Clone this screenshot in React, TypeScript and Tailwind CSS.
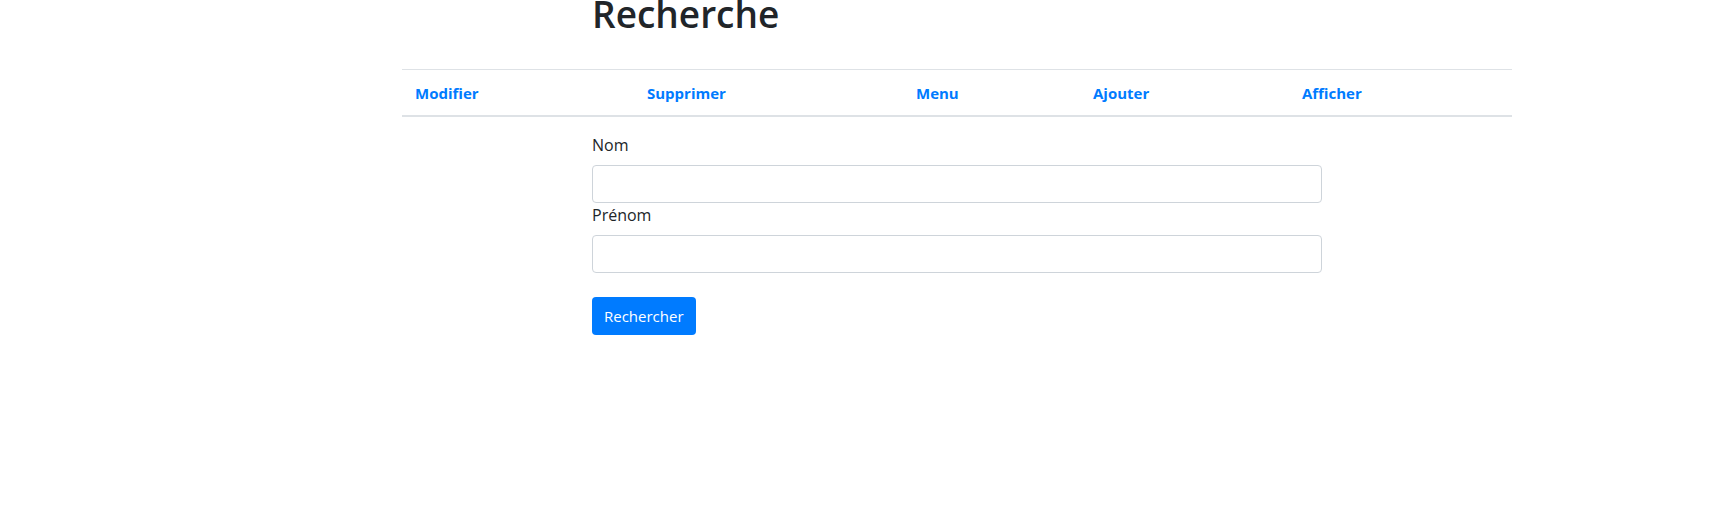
const NAV = [
  { label: "Modifier", w: "w-[232px]" },
  { label: "Supprimer", w: "w-[269px]" },
  { label: "Menu", w: "w-[177px]" },
  { label: "Ajouter", w: "w-[209px]" },
  { label: "Afficher", w: "flex-1" },
];

const Field = ({ label }: { label: string }) => (
  <div>
    <label className="block mb-2 text-[16px] leading-6 text-[#212529]">{label}</label>
    <input
      type="text"
      className="block w-full h-[38px] rounded border border-[#ced4da] bg-white px-3 text-[16px] text-[#495057] outline-none"
    />
  </div>
);

export default function App() {
  return (
    <div
      className="min-h-[531px] w-full bg-white"
      style={{ fontFamily: '"Open Sans", "Noto Sans", sans-serif' }}
    >
      {/* title */}
      <div className="ml-[592px] pb-[42px]">
        <h1 className="text-[37px] font-semibold leading-[27px] text-[#212529]">Recherche</h1>
      </div>

      {/* menu bar */}
      <nav className="ml-[402px] w-[1110px] h-[48px] flex items-center border-t border-b-2 border-[#dee2e6]">
        {NAV.map((n) => (
          <div key={n.label} className={`${n.w} pl-[13px]`}>
            <a href="#" className="text-[15px] font-bold text-[#007bff]">
              {n.label}
            </a>
          </div>
        ))}
      </nav>

      {/* search form */}
      <form className="ml-[592px] mt-[16px] w-[730px]" onSubmit={(e) => e.preventDefault()}>
        <Field label="Nom" />
        <Field label="Prénom" />
        <button
          type="submit"
          className="mt-6 h-[38px] rounded bg-[#007bff] px-3 text-[15px] text-white"
        >
          Rechercher
        </button>
      </form>
    </div>
  );
}
